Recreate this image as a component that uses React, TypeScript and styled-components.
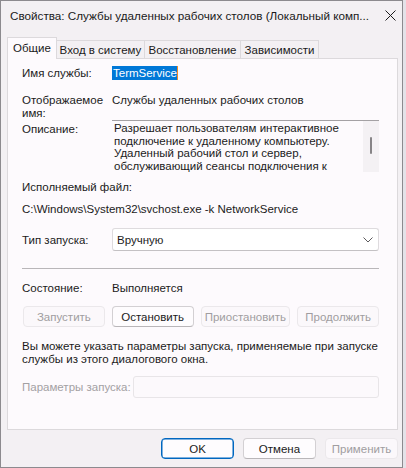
import React from 'react';
import styled, { createGlobalStyle } from 'styled-components';

const GlobalStyle = createGlobalStyle`
  html, body {
    margin: 0;
    padding: 0;
    background: #e4e2e8;
  }
  body {
    font-family: 'Liberation Sans', 'Noto Sans', sans-serif;
    font-size: 11.5px;
    color: #1b1b1b;
  }
`;

const Window = styled.div`
  box-sizing: border-box;
  width: 403px;
  height: 468px;
  background: #f3f0f3;
  border: 1px solid #8c8a8e;
  display: flex;
  flex-direction: column;
`;

const TitleBar = styled.div`
  height: 36px;
  display: flex;
  align-items: flex-start;
  justify-content: space-between;
  padding: 8px 0 0 9px;
  box-sizing: border-box;
`;

const Title = styled.div`
  font-size: 11.7px;
  line-height: 14px;
  white-space: nowrap;
  color: #1a1a1a;
`;

const CloseButton = styled.div`
  width: 23px;
  height: 14px;
  display: flex;
  justify-content: center;
  padding-top: 1px;
`;

const Body = styled.div`
  padding: 0 4px 0 6px;
  display: flex;
  flex-direction: column;
`;

const TabRow = styled.div`
  display: flex;
  align-items: flex-end;
  height: 22px;
  position: relative;
  z-index: 1;
  margin-bottom: -1px;
`;

const Tab = styled.div<{ $active?: boolean; $w: number }>`
  box-sizing: border-box;
  width: ${p => p.$w}px;
  height: ${p => (p.$active ? 22 : 19)}px;
  display: flex;
  align-items: center;
  justify-content: center;
  background: ${p => (p.$active ? '#fdfafd' : '#f3f0f3')};
  border: 1px solid #dcd9dc;
  border-bottom: ${p => (p.$active ? 'none' : '1px solid #dcd9dc')};
  margin-left: ${p => (p.$active ? 0 : -1)}px;
  padding-bottom: ${p => (p.$active ? 2 : 0)}px;
  white-space: nowrap;
`;

const Panel = styled.div`
  box-sizing: border-box;
  background: #fdfafd;
  border: 1px solid #dcd9dc;
  height: 372px;
  padding: 6px 18px 0 14px;
  display: flex;
  flex-direction: column;
`;

const Row = styled.div<{ $mt?: number; $cols?: number }>`
  display: grid;
  grid-template-columns: ${p => p.$cols ?? 90}px 1fr;
  align-items: center;
  margin-top: ${p => p.$mt ?? 0}px;
  line-height: 16px;
`;

const TopRow = styled(Row)`
  align-items: start;
`;

const Label = styled.div<{ $disabled?: boolean }>`
  color: ${p => (p.$disabled ? '#a3a0a3' : '#1b1b1b')};
  white-space: nowrap;
`;

const TwoLineLabel = styled.div`
  line-height: 13px;
`;

const Value = styled.div`
  white-space: nowrap;
`;

const Selected = styled.span`
  background: #0078d7;
  color: #ffffff;
  padding: 0 0 0 1px;
  line-height: 14px;
  display: inline-block;
  border-right: 1px solid #f08a24;
`;

const DescLabel = styled.div`
  padding-top: 3px;
  line-height: 13px;
`;

const DescBox = styled.div`
  height: 52px;
  border-top: 1px solid #a4a1a4;
  box-sizing: border-box;
  display: flex;
  overflow: hidden;
`;

const DescText = styled.div`
  flex: 1;
  padding: 1px 0 0 2px;
  line-height: 12.5px;
  white-space: nowrap;
`;

const ScrollTrack = styled.div`
  width: 16px;
  background: #f4f1f4;
  display: flex;
  justify-content: center;
  padding-top: 16px;
  box-sizing: border-box;
`;

const ScrollThumb = styled.div`
  width: 2px;
  height: 17px;
  border-radius: 1px;
  background: #878487;
`;

const Line = styled.div<{ $mt?: number }>`
  margin-top: ${p => p.$mt ?? 0}px;
  line-height: 16px;
  white-space: nowrap;
`;

const Select = styled.div`
  box-sizing: border-box;
  height: 23px;
  background: #ffffff;
  border: 1px solid #dedbde;
  border-bottom-color: #c4c1c4;
  border-radius: 3px;
  display: flex;
  align-items: center;
  justify-content: space-between;
  padding: 0 5px 0 4px;
`;

const Separator = styled.div`
  height: 1px;
  background: #b9b6b9;
  margin-top: 17px;
`;

const ButtonRow = styled.div`
  display: flex;
  gap: 7px;
  margin-top: 10px;
  padding-left: 1px;
`;

const Button = styled.div<{ $disabled?: boolean; $w: number; $primary?: boolean }>`
  box-sizing: border-box;
  width: ${p => p.$w}px;
  height: 21px;
  display: flex;
  align-items: center;
  justify-content: center;
  border-radius: 4px;
  background: ${p => (p.$disabled ? '#fbf8fb' : '#fefcfe')};
  border: 1px solid
    ${p => (p.$primary ? '#0067c0' : p.$disabled ? '#ebe8eb' : '#d3d0d3')};
  border-bottom-color: ${p =>
    p.$primary ? '#0067c0' : p.$disabled ? '#ebe8eb' : '#b9b6b9'};
  box-shadow: ${p => (p.$primary ? 'inset 0 0 0 0.5px #0067c0' : 'none')};
  color: ${p => (p.$disabled ? '#a09da0' : '#1b1b1b')};
  white-space: nowrap;
`;

const Note = styled.div`
  margin-top: 13px;
  line-height: 13px;
  white-space: nowrap;
`;

const DisabledInput = styled.div`
  box-sizing: border-box;
  height: 22px;
  border: 1px solid #e8e5e8;
  border-radius: 3px;
  background: #fcf9fc;
`;

const Footer = styled.div`
  display: flex;
  justify-content: flex-end;
  gap: 9px;
  margin-top: 8px;
`;

const Chevron = () => (
  <svg width="10" height="6" viewBox="0 0 10 6">
    <path d="M0.5 0.5 L5 5 L9.5 0.5" fill="none" stroke="#5c5a5c" strokeWidth="1" />
  </svg>
);

const CloseIcon = () => (
  <svg width="11" height="11" viewBox="0 0 11 11">
    <path d="M0.5 0.5 L10.5 10.5 M10.5 0.5 L0.5 10.5" stroke="#1b1b1b" strokeWidth="1" />
  </svg>
);

export default function App() {
  const tabs = [
    { text: 'Общие', w: 50, active: true },
    { text: 'Вход в систему', w: 89 },
    { text: 'Восстановление', w: 97 },
    { text: 'Зависимости', w: 79 },
  ];
  return (
    <>
      <GlobalStyle />
      <Window>
        <TitleBar>
          <Title>Свойства: Службы удаленных рабочих столов (Локальный комп...</Title>
          <CloseButton>
            <CloseIcon />
          </CloseButton>
        </TitleBar>
        <Body>
          <TabRow>
            {tabs.map(t => (
              <Tab key={t.text} $w={t.w} $active={t.active}>
                {t.text}
              </Tab>
            ))}
          </TabRow>
          <Panel>
            <Row>
              <Label>Имя службы:</Label>
              <Value>
                <Selected>TermService</Selected>
              </Value>
            </Row>
            <TopRow $mt={13}>
              <TwoLineLabel>
                Отображаемое
                <br />
                имя:
              </TwoLineLabel>
              <TwoLineLabel>Службы удаленных рабочих столов</TwoLineLabel>
            </TopRow>
            <TopRow>
              <DescLabel>Описание:</DescLabel>
              <DescBox>
                <DescText>
                  Разрешает пользователям интерактивное
                  <br />
                  подключение к удаленному компьютеру.
                  <br />
                  Удаленный рабочий стол и сервер,
                  <br />
                  обслуживающий сеансы подключения к
                </DescText>
                <ScrollTrack>
                  <ScrollThumb />
                </ScrollTrack>
              </DescBox>
            </TopRow>
            <Line $mt={7}>Исполняемый файл:</Line>
            <Line $mt={6}>C:\Windows\System32\svchost.exe -k NetworkService</Line>
            <Row $mt={11}>
              <Label>Тип запуска:</Label>
              <Select>
                <span>Вручную</span>
                <Chevron />
              </Select>
            </Row>
            <Separator />
            <Row $mt={11}>
              <Label>Состояние:</Label>
              <Value>Выполняется</Value>
            </Row>
            <ButtonRow>
              <Button $w={82} $disabled>
                Запустить
              </Button>
              <Button $w={82}>Остановить</Button>
              <Button $w={90} $disabled>
                Приостановить
              </Button>
              <Button $w={82} $disabled>
                Продолжить
              </Button>
            </ButtonRow>
            <Note>
              Вы можете указать параметры запуска, применяемые при запуске
              <br />
              службы из этого диалогового окна.
            </Note>
            <Row $mt={10} $cols={111}>
              <Label $disabled>Параметры запуска:</Label>
              <DisabledInput />
            </Row>
          </Panel>
          <Footer>
            <Button $w={73} $primary>
              OK
            </Button>
            <Button $w={73}>Отмена</Button>
            <Button $w={73} $disabled>
              Применить
            </Button>
          </Footer>
        </Body>
      </Window>
    </>
  );
}
